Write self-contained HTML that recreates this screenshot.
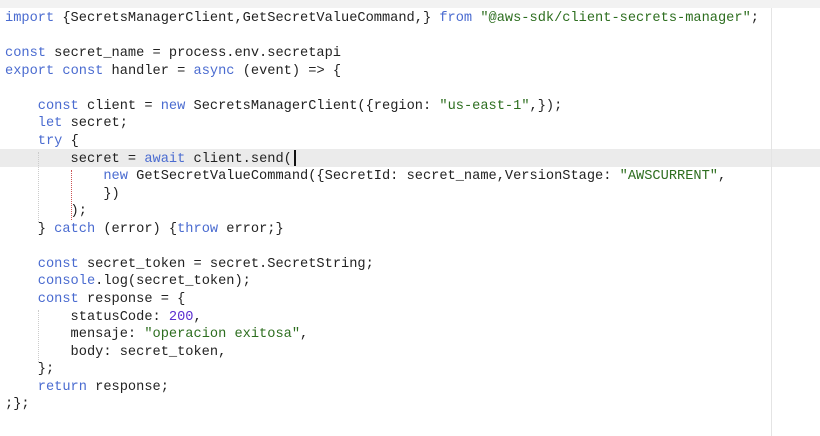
<!DOCTYPE html>
<html><head><style>
body{margin:0;width:820px;height:436px;background:#fff;overflow:hidden;position:relative;font-family:"Liberation Mono","DejaVu Sans Mono",monospace;}
.top{position:absolute;left:0;top:0;width:820px;height:8px;background:#f2f2f2;}
.hl{position:absolute;left:0;top:149px;width:820px;height:18px;background:#ebebeb;}
.margin{position:absolute;left:771px;top:8px;width:1px;height:428px;background:#e4e4e4;}
pre{position:absolute;left:5px;top:10px;margin:0;font-family:inherit;font-size:13.67px;line-height:17.57px;color:#222;}
.k{color:#4a6bd0}.s{color:#2d6e1f}.n{color:#5b2fd0}
.g{position:absolute;width:0;border-left:1px dotted #ccc;}
.cur{position:absolute;left:294px;top:150px;width:2px;height:16px;background:#111;}
</style></head><body>
<div class="top"></div><div class="hl"></div><div class="margin"></div>
<div class="g" style="left:38px;top:152px;height:70px"></div>
<div class="g" style="left:71px;top:170px;height:50px;border-color:#c55"></div>
<div class="g" style="left:38px;top:310px;height:52px"></div>
<div class="cur"></div>
<pre><span class="k">import</span> {SecretsManagerClient,GetSecretValueCommand,} <span class="k">from</span> <span class="s">"@aws-sdk/client-secrets-manager"</span>;

<span class="k">const</span> secret_name = process.env.secretapi
<span class="k">export</span> <span class="k">const</span> handler = <span class="k">async</span> (event) => {

    <span class="k">const</span> client = <span class="k">new</span> SecretsManagerClient({region: <span class="s">"us-east-1"</span>,});
    <span class="k">let</span> secret;
    <span class="k">try</span> {
        secret = <span class="k">await</span> client.send(
            <span class="k">new</span> GetSecretValueCommand({SecretId: secret_name,VersionStage: <span class="s">"AWSCURRENT"</span>,
            })
        );
    } <span class="k">catch</span> (error) {<span class="k">throw</span> error;}

    <span class="k">const</span> secret_token = secret.SecretString;
    <span class="k">console</span>.log(secret_token);
    <span class="k">const</span> response = {
        statusCode: <span class="n">200</span>,
        mensaje: <span class="s">"operacion exitosa"</span>,
        body: secret_token,
    };
    <span class="k">return</span> response;
;};</pre>
</body></html>
